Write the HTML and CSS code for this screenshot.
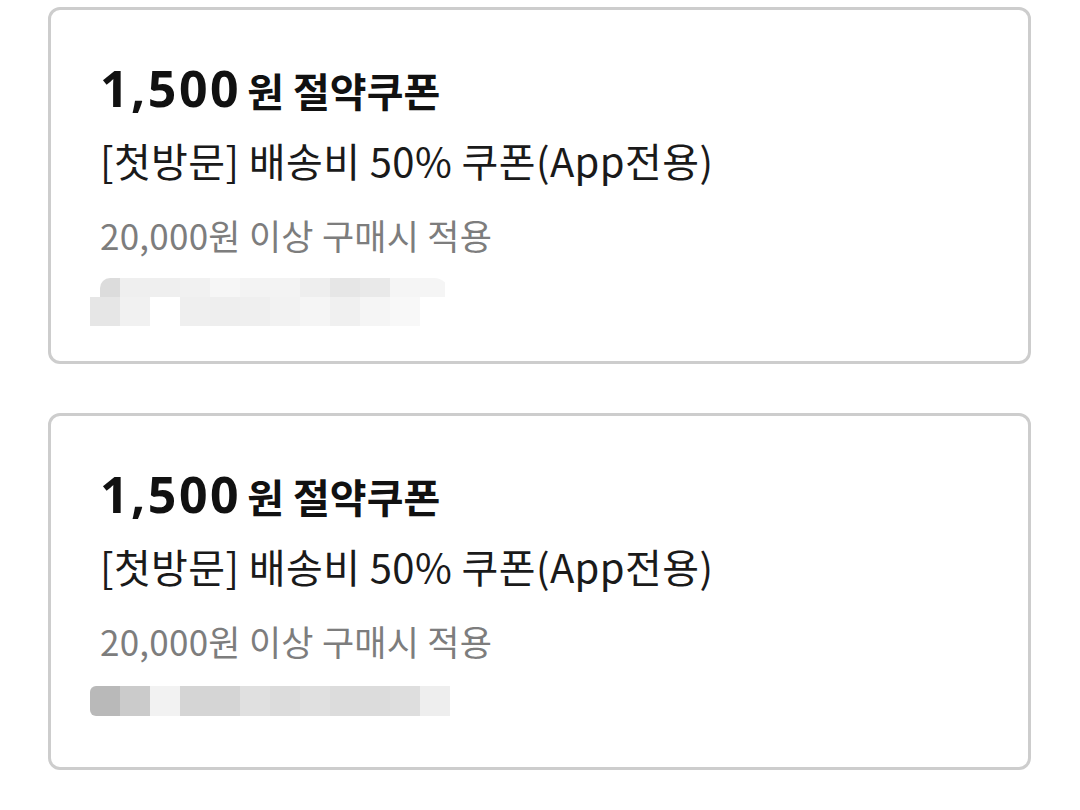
FILE: index.html
```html
<html>
<head>
  <title>쿠폰함</title>
  <link rel="stylesheet" href="styles.css">
</head>
<body>
    <div class="coupon_list">
        <div class="coupon">
            <div class="coupon_title">
                <span class="coupon_amount">1,500</span>
                <span class="coupon_unit">원 절약쿠폰</span>
            </div>
            <div class="coupon_name">[첫방문] 배송비 50% 쿠폰(App전용)</div>
            <div class="coupon_cond">20,000원 이상 구매시 적용</div>
            <div class="coupon_hidden hidden_soft">
                <div class="hidden_row row_top"></div>
                <div class="hidden_row row_bottom"></div>
            </div>
        </div>

        <div class="coupon">
            <div class="coupon_title">
                <span class="coupon_amount">1,500</span>
                <span class="coupon_unit">원 절약쿠폰</span>
            </div>
            <div class="coupon_name">[첫방문] 배송비 50% 쿠폰(App전용)</div>
            <div class="coupon_cond">20,000원 이상 구매시 적용</div>
            <div class="coupon_hidden">
                <div class="hidden_row row_solid"></div>
            </div>
        </div>
    </div>
</body>
</html>
```

FILE: styles.css
```css
body {
    padding: 0px;
    margin: 0px;
    background-color: #fff;
    font-family: "Noto Sans CJK KR", sans-serif;
}

.coupon_list {
    display: flex;
    flex-direction: column;
    gap: 49px;
    padding: 7px 49px 0 48px;
}

.coupon {
    height: 351px;
    border: 3px solid #cdcdcd;
    border-radius: 12px;
    padding: 0 49px;
}

.coupon_title {
    display: flex;
    align-items: baseline;
    gap: 6px;
    margin-top: 44px;
    height: 60px;
    color: #111;
}

.coupon_amount {
    font-family: "Noto Sans", sans-serif;
    font-weight: bold;
    font-size: 50px;
    letter-spacing: 2.5px;
}

.coupon_unit {
    font-weight: bold;
    font-size: 40px;
}

.coupon_name {
    margin-top: 21px;
    font-size: 40px;
    letter-spacing: 0.4px;
    line-height: 50px;
    color: #1a1a1a;
}

.coupon_cond {
    margin-top: 27px;
    font-size: 35px;
    letter-spacing: 0.25px;
    line-height: 46px;
    color: #7d7d7d;
}

/* masked personal info, drawn as a row of grey tiles */
.coupon_hidden {
    margin-left: -10px;
    margin-top: 22px;
    width: 360px;
}

.hidden_soft {
    margin-top: 20px;
}

.hidden_row {
    height: 30px;
}

.row_top {
    height: 19px;
    margin-left: 10px;
    border-radius: 10px 16px 0 0;
    background: linear-gradient(to right,
        #dcdcdc 0 20px, #efefef 20px 80px, #f1f1f1 80px 110px,
        #f6f6f6 110px 140px, #f3f3f3 140px 200px, #eeeeee 200px 230px,
        #e6e6e6 230px 260px, #e9e9e9 260px 290px, #f5f5f5 290px 345px,
        transparent 345px);
}

.row_bottom {
    height: 29px;
    border-radius: 0 0 26px 0;
    background: linear-gradient(to right,
        #e6e6e6 0 30px, #f1f1f1 30px 60px, #fff 60px 90px,
        #efefef 90px 120px, #eeeeee 120px 150px, #efefef 150px 180px,
        #f2f2f2 180px 210px, #f5f5f5 210px 240px, #f0f0f0 240px 270px,
        #f5f5f5 270px 300px, #f8f8f8 300px 330px, transparent 330px);
}

.row_solid {
    border-radius: 6px 0 0 6px;
    background: linear-gradient(to right,
        #b9b9b9 0 30px, #cbcbcb 30px 60px, #f2f2f2 60px 90px,
        #d5d5d5 90px 150px, #e0e0e0 150px 180px, #dcdcdc 180px 210px,
        #e0e0e0 210px 240px, #dcdcdc 240px 300px, #dedede 300px 330px,
        #eeeeee 330px 360px);
}
```
